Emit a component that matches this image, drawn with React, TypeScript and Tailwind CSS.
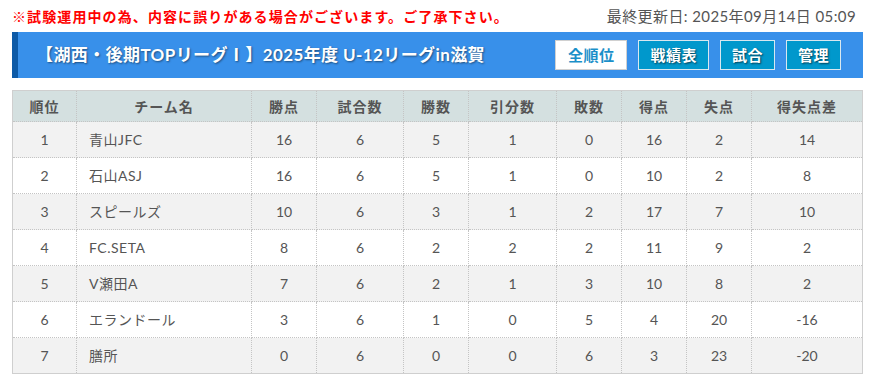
const font = { fontFamily: 'Lato, "Noto Sans CJK JP", sans-serif' };

type Row = {
  rank: number;
  team: string;
  pts: number;
  played: number;
  win: number;
  draw: number;
  lose: number;
  gf: number;
  ga: number;
  gd: number;
};

const rows: Row[] = [
  { rank: 1, team: "青山JFC", pts: 16, played: 6, win: 5, draw: 1, lose: 0, gf: 16, ga: 2, gd: 14 },
  { rank: 2, team: "石山ASJ", pts: 16, played: 6, win: 5, draw: 1, lose: 0, gf: 10, ga: 2, gd: 8 },
  { rank: 3, team: "スピールズ", pts: 10, played: 6, win: 3, draw: 1, lose: 2, gf: 17, ga: 7, gd: 10 },
  { rank: 4, team: "FC.SETA", pts: 8, played: 6, win: 2, draw: 2, lose: 2, gf: 11, ga: 9, gd: 2 },
  { rank: 5, team: "V瀬田A", pts: 7, played: 6, win: 2, draw: 1, lose: 3, gf: 10, ga: 8, gd: 2 },
  { rank: 6, team: "エランドール", pts: 3, played: 6, win: 1, draw: 0, lose: 5, gf: 4, ga: 20, gd: -16 },
  { rank: 7, team: "膳所", pts: 0, played: 6, win: 0, draw: 0, lose: 6, gf: 3, ga: 23, gd: -20 },
];

const heads = [
  { label: "順位", w: "w-[64px]" },
  { label: "チーム名", w: "w-[175px]" },
  { label: "勝点", w: "w-[65px]" },
  { label: "試合数", w: "w-[87px]" },
  { label: "勝数", w: "w-[65px]" },
  { label: "引分数", w: "w-[88px]" },
  { label: "敗数", w: "w-[65px]" },
  { label: "得点", w: "w-[65px]" },
  { label: "失点", w: "w-[65px]" },
  { label: "得失点差", w: "w-[111px]" },
];

const cell = "border border-dotted border-[#c4c4c4] h-[36px] text-center";

function NavButton({ label, active }: { label: string; active?: boolean }) {
  return active ? (
    <span className="flex h-[30px] items-center border border-[#d0d0d0] bg-white px-[12px] text-[15px] font-bold tracking-[0.5px] text-[#1a8fc9]">
      {label}
    </span>
  ) : (
    <span className="flex h-[30px] items-center border border-[#d8e8f0] bg-[#0098cc] px-[11px] text-[15px] font-bold tracking-[0.5px] text-white [text-shadow:1px_1px_2px_rgba(0,0,0,0.6)]">
      {label}
    </span>
  );
}

export default function App() {
  return (
    <div className="w-[876px] h-[388px] bg-white pl-[12px] pr-[13px] text-[#555]" style={font}>
      <div className="flex h-[32px] items-center justify-between">
        <p className="text-[14px] font-bold tracking-[1.1px] text-[#ff0000]">
          ※試験運用中の為、内容に誤りがある場合がございます。ご了承下さい。
        </p>
        <p className="pr-[7px] text-[15px] tracking-[0.4px] text-[#555]">最終更新日: 2025年09月14日 05:09</p>
      </div>

      <div className="flex h-[46px] items-center border-l-[6px] border-[#0d5aa7] bg-[#3890ea] pl-[18px] pr-[22px]">
        <h1 className="flex-1 text-[17px] font-bold tracking-[0.4px] text-white [text-shadow:1px_1px_2px_rgba(0,0,0,0.45)]">
          【湖西・後期TOPリーグⅠ】2025年度 U-12リーグin滋賀
        </h1>
        <div className="flex gap-[11px]">
          <NavButton label="全順位" active />
          <NavButton label="戦績表" />
          <NavButton label="試合" />
          <NavButton label="管理" />
        </div>
      </div>

      <table className="mt-[12px] w-[850px] table-fixed border-collapse border border-[#cfcfcf] text-[14px]">
        <thead>
          <tr className="bg-[#d4e0e0]">
            {heads.map((h) => (
              <th
                key={h.label}
                className={`${h.w} h-[31px] border border-dotted border-[#c4c4c4] text-center font-bold tracking-[1px] text-[#555]`}
              >
                {h.label}
              </th>
            ))}
          </tr>
        </thead>
        <tbody>
          {rows.map((r, i) => (
            <tr key={r.rank} className={i % 2 === 0 ? "bg-[#f2f2f2]" : "bg-white"}>
              <td className={cell}>{r.rank}</td>
              <td className={`${cell} !text-left pl-[12px] tracking-[0.5px]`}>{r.team}</td>
              <td className={cell}>{r.pts}</td>
              <td className={cell}>{r.played}</td>
              <td className={cell}>{r.win}</td>
              <td className={cell}>{r.draw}</td>
              <td className={cell}>{r.lose}</td>
              <td className={cell}>{r.gf}</td>
              <td className={cell}>{r.ga}</td>
              <td className={cell}>{r.gd}</td>
            </tr>
          ))}
        </tbody>
      </table>
    </div>
  );
}
